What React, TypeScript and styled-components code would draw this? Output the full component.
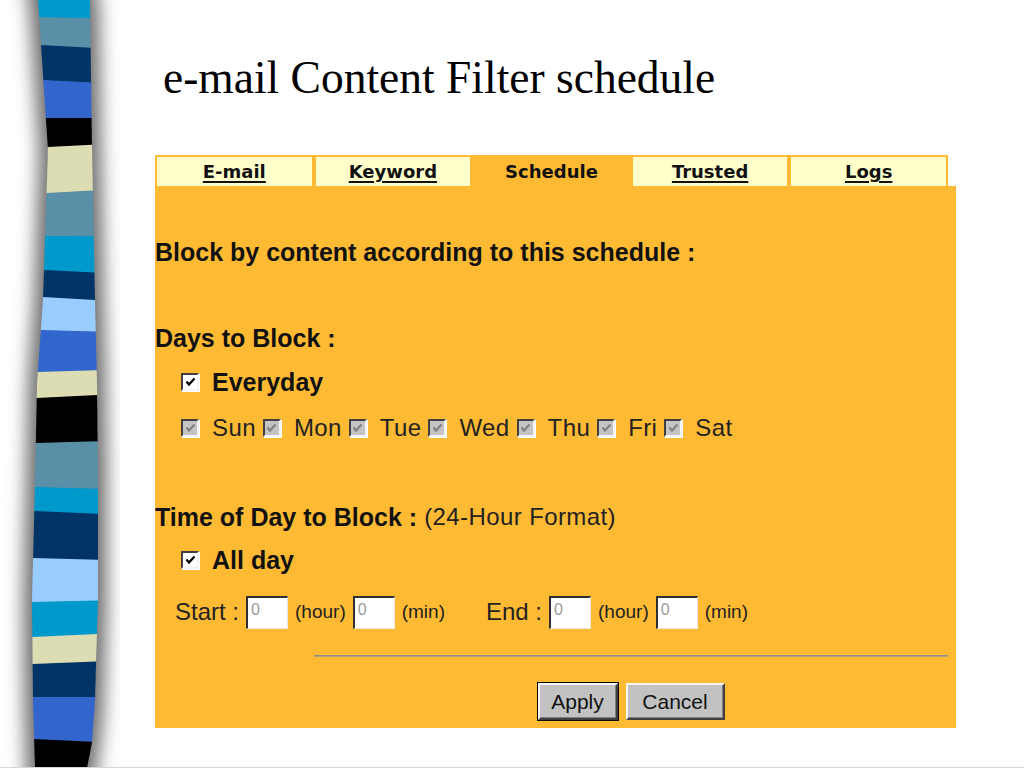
import React from "react";
import styled, { createGlobalStyle } from "styled-components";

const GlobalStyle = createGlobalStyle`
  html, body {
    margin: 0;
    padding: 0;
    background: #ffffff;
  }
`;

const ORANGE = "#FFBA33";
const TAB_BG = "#FFFFCC";

// band boundaries and colours of the decorative stripe on the left
const bands: Array<[number, number, string]> = [
  [0, 17, "#0099CC"],
  [17, 45, "#5A8FA8"],
  [45, 80, "#003366"],
  [80, 118, "#3366CC"],
  [118, 147, "#000000"],
  [147, 193, "#DDDDB3"],
  [193, 236, "#5A8FA8"],
  [236, 270, "#0099CC"],
  [270, 297, "#003366"],
  [297, 330, "#99CCFF"],
  [330, 372, "#3366CC"],
  [372, 398, "#DDDDB3"],
  [398, 443, "#000000"],
  [443, 487, "#5A8FA8"],
  [487, 511, "#0099CC"],
  [511, 558, "#003366"],
  [558, 602, "#99CCFF"],
  [602, 637, "#0099CC"],
  [637, 664, "#DDDDB3"],
  [664, 697, "#003366"],
  [697, 739, "#3366CC"],
  [739, 768, "#000000"],
];

const leftPts = [
  [0, 38], [150, 48], [300, 43], [384, 37], [484, 35], [600, 32], [700, 33], [768, 35],
];
const rightPts = [
  [0, 90], [150, 92], [300, 95], [384, 97], [484, 98], [600, 98], [700, 95], [740, 92], [768, 87],
];

const interp = (pts: number[][], y: number) => {
  for (let i = 0; i < pts.length - 1; i++) {
    const [y0, x0] = pts[i];
    const [y1, x1] = pts[i + 1];
    if (y >= y0 && y <= y1) return x0 + ((x1 - x0) * (y - y0)) / (y1 - y0);
  }
  return pts[pts.length - 1][1];
};

const tilt = (y: number) => (y <= 0 || y >= 768 ? 0 : 3 * Math.sin(y / 37));

const bandPath = (y0: number, y1: number) => {
  const pts: string[] = [];
  const steps = 6;
  for (let i = 0; i <= steps; i++) {
    const y = y0 + ((y1 - y0) * i) / steps;
    pts.push(`${interp(leftPts, y).toFixed(1)},${y.toFixed(1)}`);
  }
  for (let i = steps; i >= 0; i--) {
    const y = y0 + ((y1 - y0) * i) / steps;
    const t = tilt(y0) + ((tilt(y1) - tilt(y0)) * i) / steps;
    pts.push(`${interp(rightPts, y).toFixed(1)},${(y + t).toFixed(1)}`);
  }
  return pts.join(" ");
};

const outlinePath = (grow: number) => {
  const pts: string[] = [];
  for (let y = -40; y <= 808; y += 16) pts.push(`${interp(leftPts, y) - grow},${y}`);
  for (let y = 808; y >= -40; y -= 16) pts.push(`${interp(rightPts, y) + grow},${y}`);
  return pts.join(" ");
};

function Stripe() {
  return (
    <svg width="120" height="767" viewBox="0 0 120 767">
      <defs>
        <filter id="blur" x="-60%" y="-5%" width="220%" height="110%">
          <feGaussianBlur stdDeviation="9" />
        </filter>
      </defs>
      <polygon points={outlinePath(9)} fill="#6e6e6e" filter="url(#blur)" />
      {bands.map(([y0, y1, c], i) => (
        <polygon key={i} points={bandPath(y0, y1 + (i < bands.length - 1 ? 0.6 : 0))} fill={c} />
      ))}
    </svg>
  );
}

function Check({ disabled }: { disabled?: boolean }) {
  return (
    <CheckBox $disabled={disabled}>
      <svg width="11" height="11" viewBox="0 0 11 11">
        <path
          d="M1.5 4.5 L4 7.5 L9.5 1.5"
          fill="none"
          stroke={disabled ? "#808080" : "#000"}
          strokeWidth="2.2"
        />
      </svg>
    </CheckBox>
  );
}

const days = ["Sun", "Mon", "Tue", "Wed", "Thu", "Fri", "Sat"];
const tabs = ["E-mail", "Keyword", "Schedule", "Trusted", "Logs"];

function App() {
  return (
    <Page>
      <GlobalStyle />
      <Side>
        <Stripe />
      </Side>
      <Main>
        <Title>e-mail Content Filter schedule</Title>
        <Panel>
          <TabRow>
            {tabs.map((t) => (
              <Tab key={t} $active={t === "Schedule"}>
                <span>{t}</span>
              </Tab>
            ))}
          </TabRow>
          <Body>
            <Line $mt={51}>
              <Strong>Block by content according to this schedule :</Strong>
            </Line>
            <Line $mt={56}>
              <Strong>Days to Block :</Strong>
            </Line>
            <Line $mt={14} $indent={26}>
              <Check />
              <Strong>Everyday</Strong>
            </Line>
            <Line $mt={16} $indent={26}>
              {days.map((d) => (
                <DayItem key={d}>
                  <Check disabled />
                  <Plain>{d}</Plain>
                </DayItem>
              ))}
            </Line>
            <Line $mt={59}>
              <Strong>Time of Day to Block :</Strong>
              <Plain>&nbsp;(24-Hour Format)</Plain>
            </Line>
            <Line $mt={13} $indent={26}>
              <Check />
              <Strong>All day</Strong>
            </Line>
            <TimeRow>
              <Label>Start :</Label>
              <TimeBox defaultValue="0" />
              <Small>(hour)</Small>
              <TimeBox defaultValue="0" />
              <Small>(min)</Small>
              <Spacer />
              <Label>End :</Label>
              <TimeBox defaultValue="0" />
              <Small>(hour)</Small>
              <TimeBox defaultValue="0" />
              <Small>(min)</Small>
            </TimeRow>
            <Divider />
            <ButtonRow>
              <Button $default $w={80}>Apply</Button>
              <Button $w={99}>Cancel</Button>
            </ButtonRow>
          </Body>
        </Panel>
      </Main>
    </Page>
  );
}

export default App;

const Page = styled.div`
  display: flex;
  width: 1024px;
  height: 767px;
  border-bottom: 1px solid #d6d6d6;
  overflow: hidden;
`;
const Side = styled.div`
  width: 120px;
  flex-shrink: 0;
  svg {
    display: block;
  }
`;
const Main = styled.div`
  display: flex;
  flex-direction: column;
  padding-left: 35px;
`;
const Title = styled.h1`
  margin: 55px 0 0 8px;
  font-family: "Liberation Serif", "Times New Roman", serif;
  font-weight: normal;
  font-size: 45.5px;
  line-height: 45px;
  color: #000;
`;
const Panel = styled.div`
  margin-top: 55px;
  display: flex;
  flex-direction: column;
  align-items: flex-start;
`;
const TabRow = styled.div`
  display: flex;
  gap: 4px;
  width: 793px;
  box-sizing: border-box;
  padding: 2px 2px 0 2px;
  background: ${ORANGE};
`;
const Tab = styled.div<{ $active?: boolean }>`
  flex: 1;
  height: 29px;
  display: flex;
  align-items: center;
  justify-content: center;
  background: ${(p) => (p.$active ? ORANGE : TAB_BG)};
  font-family: "DejaVu Sans", Verdana, sans-serif;
  font-weight: bold;
  font-size: 18px;
  color: #111;
  span {
    text-decoration: ${(p) => (p.$active ? "none" : "underline")};
    text-underline-offset: 3px;
    text-decoration-thickness: 2px;
  }
`;
const Body = styled.div`
  width: 801px;
  height: 542px;
  box-sizing: border-box;
  background: ${ORANGE};
  display: flex;
  flex-direction: column;
`;
const Line = styled.div<{ $mt: number; $indent?: number }>`
  margin-top: ${(p) => p.$mt}px;
  padding-left: ${(p) => p.$indent || 0}px;
  height: 30px;
  display: flex;
  align-items: center;
  font-family: "Liberation Sans", Arial, sans-serif;
  color: #111;
  white-space: nowrap;
`;
const Strong = styled.span`
  font-weight: bold;
  font-size: 25px;
`;
const Plain = styled.span`
  font-size: 24px;
  color: #222;
  letter-spacing: 0.4px;
`;
const Label = styled.span`
  font-size: 24px;
  color: #222;
  margin-right: 7px;
`;
const Small = styled.span`
  font-size: 19px;
  color: #222;
  margin: 0 7px;
`;
const DayItem = styled.span`
  display: inline-flex;
  align-items: center;
  margin-right: 7px;
`;
const CheckBox = styled.span<{ $disabled?: boolean }>`
  width: 18px;
  height: 18px;
  box-sizing: border-box;
  display: inline-flex;
  align-items: center;
  justify-content: center;
  margin-right: 13px;
  background: ${(p) => (p.$disabled ? "#c4c4c4" : "#fff")};
  border-top: 2px solid #404040;
  border-left: 2px solid #404040;
  border-right: 2px solid #f4f4f4;
  border-bottom: 2px solid #f4f4f4;
  box-shadow: 1px 1px 0 #fff;
`;
const TimeRow = styled.div`
  margin-top: 20px;
  padding-left: 20px;
  height: 34px;
  display: flex;
  align-items: center;
  font-family: "Liberation Sans", Arial, sans-serif;
  white-space: nowrap;
`;
const TimeBox = styled.input`
  width: 42px;
  height: 33px;
  box-sizing: border-box;
  padding: 0 0 6px 3px;
  font-family: "Liberation Sans", Arial, sans-serif;
  font-size: 16px;
  color: #9a9a9a;
  background: #fff;
  border-top: 2px solid #303030;
  border-left: 2px solid #303030;
  border-right: 1px solid #e8e8e8;
  border-bottom: 1px solid #e8e8e8;
  outline: none;
`;
const Spacer = styled.span`
  width: 34px;
`;
const Divider = styled.div`
  margin: 26px 8px 0 159px;
  height: 0;
  border-top: 1px solid #8c8c8c;
  border-bottom: 1px solid #b5a07a;
`;
const ButtonRow = styled.div`
  margin: 26px 8px 0 159px;
  display: flex;
  justify-content: center;
  gap: 8px;
`;
const Button = styled.button<{ $default?: boolean; $w: number }>`
  width: ${(p) => p.$w}px;
  height: 37px;
  padding: 0;
  font-family: "Liberation Sans", Arial, sans-serif;
  font-size: 21px;
  color: #111;
  background: #c2c2c2;
  border: 2px solid;
  border-color: #f6f6f6 #404040 #404040 #f6f6f6;
  outline: ${(p) => (p.$default ? "1px solid #000" : "none")};
  box-shadow: inset -1px -1px 0 #808080;
`;
